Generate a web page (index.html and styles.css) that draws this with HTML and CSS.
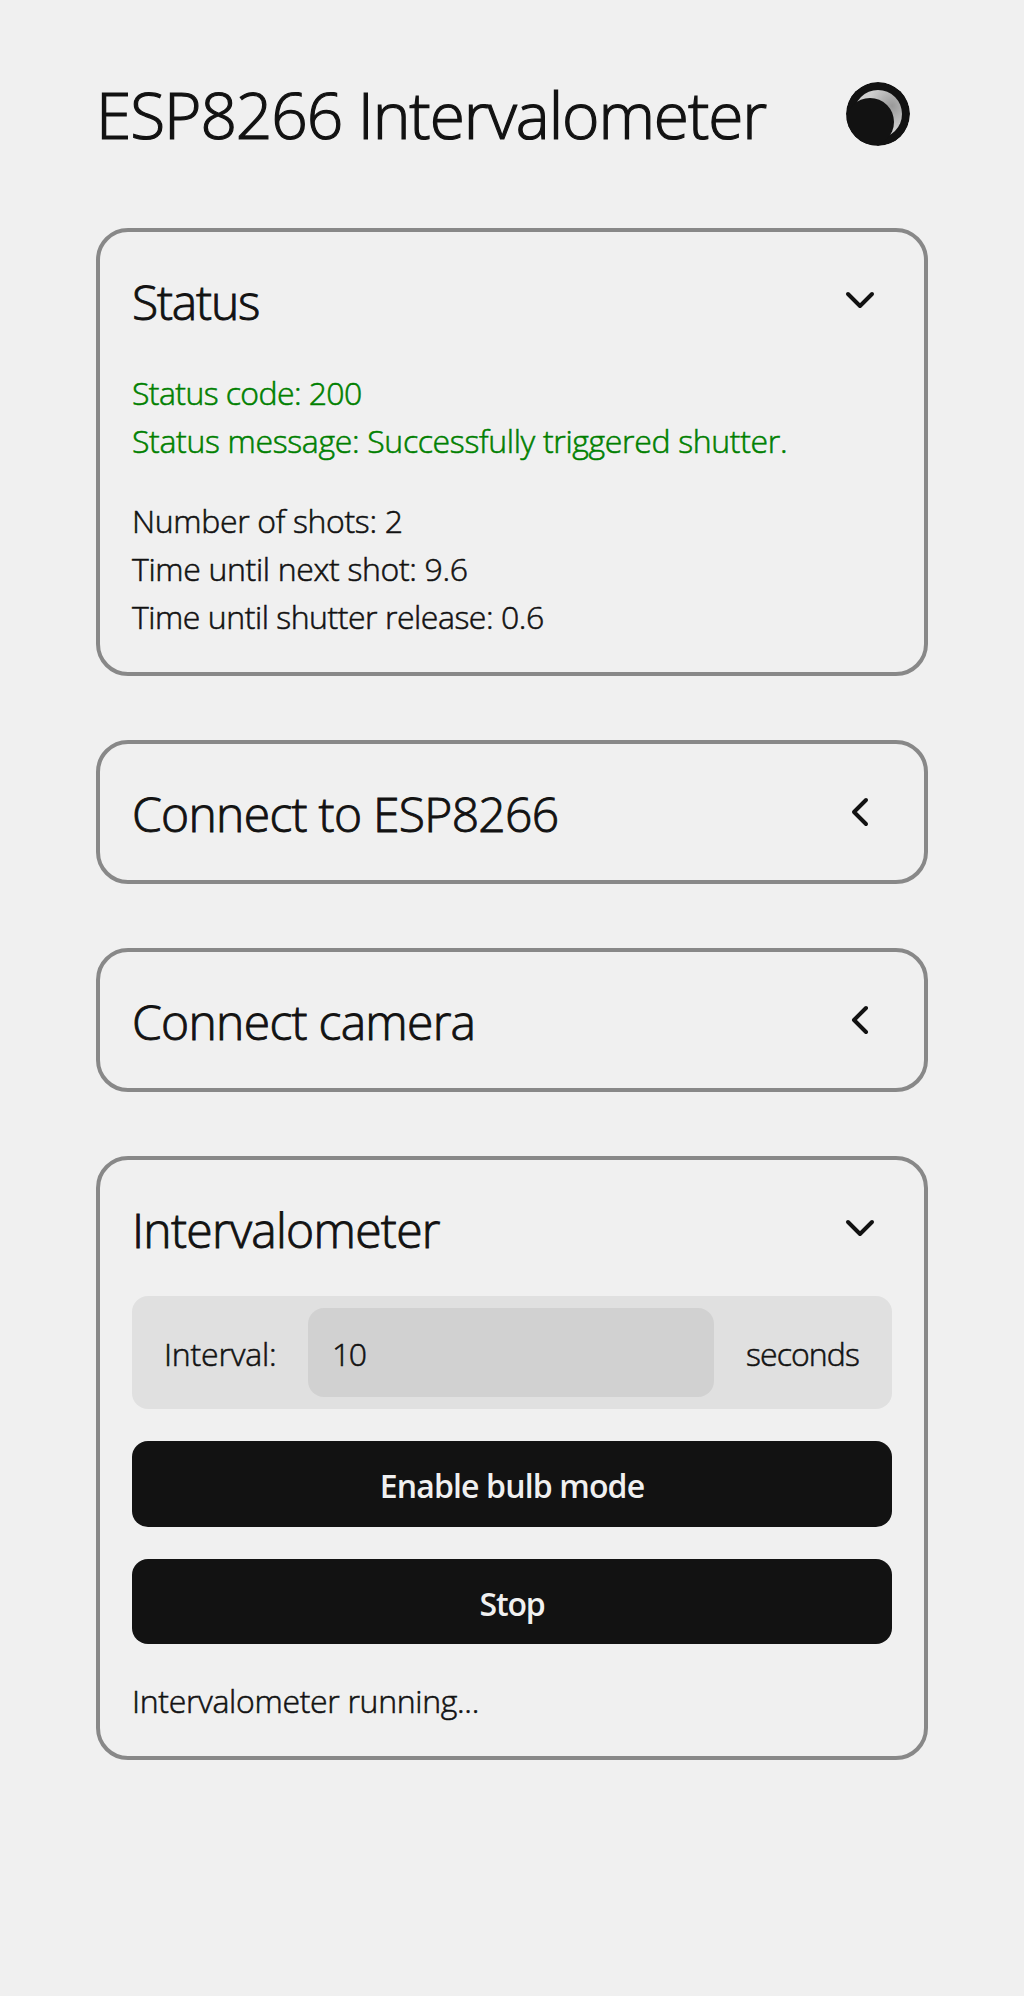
FILE: index.html
```html
<!DOCTYPE html>
<html lang="en">
<head>
  <meta charset="utf-8">
  <title>ESP8266 Intervalometer</title>
  <link rel="stylesheet" href="styles.css">
</head>
<body>
  <main class="page">
    <header class="top">
      <h1 class="title">ESP8266 Intervalometer</h1>
      <button class="theme" aria-label="Toggle theme">
        <svg class="moon" viewBox="0 0 64 64">
          <defs>
            <radialGradient id="shine" gradientUnits="userSpaceOnUse" cx="46" cy="24" r="24">
              <stop offset="0" stop-color="#999"/>
              <stop offset="1" stop-color="#d0d0d0"/>
            </radialGradient>
            <clipPath id="disc"><circle cx="32" cy="32" r="32"/></clipPath>
          </defs>
          <g clip-path="url(#disc)">
            <circle cx="32" cy="32" r="32" fill="#121212"/>
            <circle cx="32" cy="32" r="24" fill="url(#shine)"/>
            <circle cx="24" cy="40" r="24" fill="#121212"/>
          </g>
        </svg>
      </button>
    </header>

    <section class="card">
      <div class="card-head">
        <h2 class="heading heading-status">Status</h2>
        <svg class="chevron" viewBox="0 0 32 32"><path d="M4 10 16 22 28 10"/></svg>
      </div>
      <div class="card-body card-status">
        <div class="lines ok">
          <p class="code">Status code: 200</p>
          <p>Status message: Successfully triggered shutter.</p>
        </div>
        <div class="lines">
          <p>Number of shots: 2</p>
          <p>Time until next shot: 9.6</p>
          <p class="release">Time until shutter release: 0.6</p>
        </div>
      </div>
    </section>

    <section class="card">
      <div class="card-head">
        <h2 class="heading">Connect to ESP8266</h2>
        <svg class="chevron closed" viewBox="0 0 32 32"><path d="M4 10 16 22 28 10"/></svg>
      </div>
    </section>

    <section class="card">
      <div class="card-head">
        <h2 class="heading">Connect camera</h2>
        <svg class="chevron closed" viewBox="0 0 32 32"><path d="M4 10 16 22 28 10"/></svg>
      </div>
    </section>

    <section class="card">
      <div class="card-head">
        <h2 class="heading">Intervalometer</h2>
        <svg class="chevron" viewBox="0 0 32 32"><path d="M4 10 16 22 28 10"/></svg>
      </div>
      <div class="card-body">
        <div class="field">
          <label class="label" for="interval">Interval:</label>
          <input class="input" id="interval" type="text" value="10">
          <span class="unit">seconds</span>
        </div>
        <button class="button">Enable bulb mode</button>
        <button class="button button-stop">Stop</button>
        <p class="running">Intervalometer running...</p>
      </div>
    </section>
  </main>
</body>
</html>
```
FILE: styles.css
```css
* {
  box-sizing: border-box;
  margin: 0;
}

body {
  background: #f0f0f0;
  color: #121212;
  font: 300 32px/48px "Open Sans", "Noto Sans", sans-serif;
  letter-spacing: -0.34px;
  -webkit-text-stroke: 0.55px currentColor;
}

.page {
  display: flex;
  flex-direction: column;
  gap: 64px;
  padding: 64px 96px;
}

.top {
  display: flex;
  align-items: center;
  justify-content: space-between;
  height: 100px;
  padding-right: 18px;
}

.title {
  padding-top: 2px;
  font-size: 64px;
  font-weight: 300;
  line-height: 96px;
  letter-spacing: -1.1px;
  white-space: nowrap;
  -webkit-text-stroke-width: 1.2px;
}

.theme {
  width: 64px;
  height: 64px;
  padding: 0;
  border: 0;
  background: none;
}

.moon {
  display: block;
  width: 64px;
  height: 64px;
}

.card {
  border: 4px solid #888;
  border-radius: 32px;
  padding: 32px;
}

.card-head {
  display: flex;
  align-items: center;
  justify-content: space-between;
  height: 72px;
  padding-right: 16px;
}

.heading {
  padding-top: 4px;
  font-size: 48px;
  font-weight: 300;
  line-height: 68px;
  letter-spacing: -0.72px;
  -webkit-text-stroke-width: 0.9px;
}

.heading-status {
  letter-spacing: -1.2px;
}

.chevron {
  width: 32px;
  height: 32px;
  fill: none;
  stroke: #121212;
  stroke-width: 4;
  stroke-linecap: round;
  stroke-linejoin: round;
}

.chevron.closed {
  transform: rotate(90deg);
}

.card-body {
  display: flex;
  flex-direction: column;
  gap: 32px;
  padding-top: 32px;
}

.card-status {
  padding-top: 33px;
  margin-bottom: -1px;
}

.ok {
  color: #008000;
}

.code {
  letter-spacing: -0.6px;
}

.release {
  letter-spacing: -0.47px;
}

.field {
  display: flex;
  align-items: center;
  height: 113px;
  padding: 0 32px;
  border-radius: 16px;
  background: #e0e0e0;
}

.label {
  width: 144px;
  padding-top: 3px;
  letter-spacing: -0.2px;
}

.input {
  width: 406px;
  height: 89px;
  padding: 2px 24px 0;
  border: 0;
  border-radius: 16px;
  background: #d1d1d1;
  color: inherit;
  font: inherit;
  letter-spacing: -1.5px;
  -webkit-text-stroke: inherit;
}

.unit {
  padding: 3px 0 0 32px;
  letter-spacing: -0.9px;
}

.button {
  height: 85.6px;
  padding: 5px 0 0;
  border: 0;
  border-radius: 16px;
  background: #121212;
  color: #f0f0f0;
  font: inherit;
  font-weight: 600;
  letter-spacing: -0.85px;
  -webkit-text-stroke: 0;
}

.button-stop {
  letter-spacing: -1.2px;
}

.running {
  margin-bottom: -1px;
  padding-top: 1px;
  letter-spacing: -0.32px;
}
```
